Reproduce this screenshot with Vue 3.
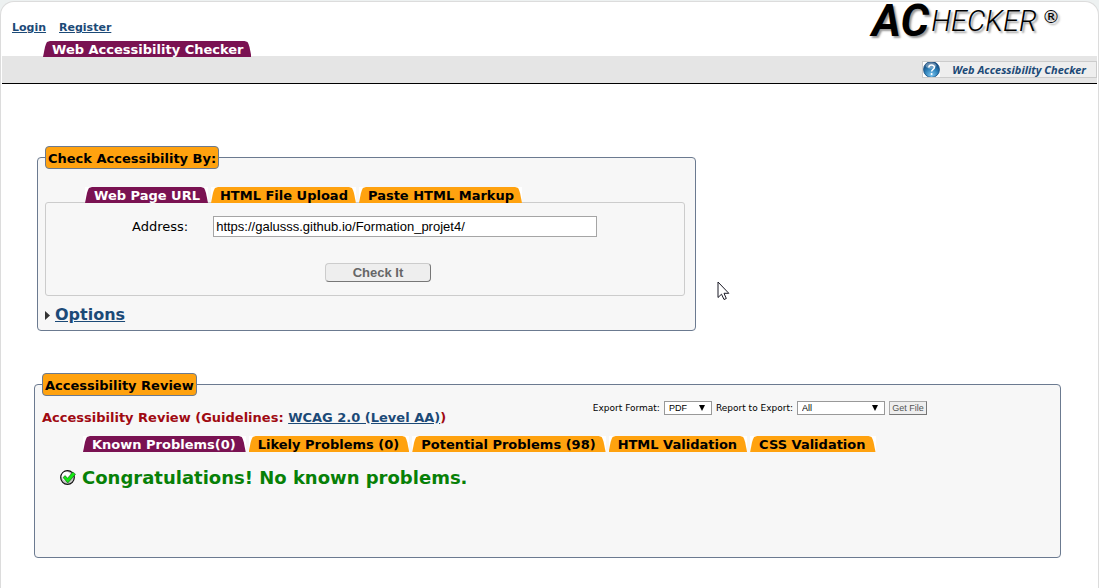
<script setup>
import { ref } from 'vue'

const address = ref('https://galusss.github.io/Formation_projet4/')
const inputTabs = ['Web Page URL', 'HTML File Upload', 'Paste HTML Markup']
const reviewTabs = [
  'Known Problems(0)',
  'Likely Problems (0)',
  'Potential Problems (98)',
  'HTML Validation',
  'CSS Validation',
]
const activeInput = ref(0)
const activeReview = ref(0)
</script>

<template>
  <div class="page">
    <header class="top">
      <div class="left">
        <nav class="account">
          <a href="#login">Login</a>
          <a href="#register">Register</a>
        </nav>
        <nav class="main-tabs">
          <a href="#checker" class="tab active">Web Accessibility Checker</a>
        </nav>
      </div>
      <div class="logo" aria-label="AChecker">
        <span class="big">AC</span><span class="small">HECKER</span><span class="reg">®</span>
      </div>
    </header>

    <div class="bar">
      <a href="#help" class="help">
        <svg width="17" height="15" viewBox="0 1 17 15" aria-hidden="true">
          <defs>
            <radialGradient id="ball" cx="0.5" cy="0.85" r="0.8">
              <stop offset="0" stop-color="#7cc4ee" />
              <stop offset="0.5" stop-color="#2f83bb" />
              <stop offset="1" stop-color="#0d3f74" />
            </radialGradient>
          </defs>
          <rect width="17" height="17" fill="#fff" />
          <circle cx="8.500" cy="8.500" r="8" fill="url(#ball)" stroke="#1b4f80" stroke-width="0.8" />
          <ellipse cx="8" cy="4.500" rx="5.500" ry="3.300" fill="#fff" opacity="0.35" />
          <path d="M5.800 6.600C5.800 3.200 11.400 3.200 11.400 6.400C11.400 8.300 8.600 8.400 8.600 10.600" fill="none" stroke="#fff" stroke-width="1.500" />
          <rect x="7.800" y="12" width="1.600" height="2" fill="#fff" />
        </svg>
        <span>Web Accessibility Checker</span>
      </a>
    </div>

    <main>
      <fieldset class="panel check">
        <legend>Check Accessibility By:</legend>
        <ul class="tabs">
          <li v-for="(t, i) in inputTabs" :key="t">
            <button type="button" class="tab" :class="{ active: i === activeInput }" @click="activeInput = i">{{ t }}</button>
          </li>
        </ul>
        <form class="url-box" @submit.prevent>
          <div class="field">
            <label for="address">Address:</label>
            <input id="address" v-model="address" type="text" />
          </div>
          <button type="submit" class="check-btn">Check It</button>
        </form>
        <div class="options">
          <svg width="5" height="9" viewBox="0 0 5 9" aria-hidden="true"><path d="M0 0L5 4.500L0 9Z" fill="#333" /></svg>
          <a href="#options">Options</a>
        </div>
      </fieldset>

      <fieldset class="panel review">
        <legend>Accessibility Review</legend>
        <div class="review-head">
          <h2>Accessibility Review (Guidelines: <a href="#wcag">WCAG 2.0 (Level AA)</a>)</h2>
          <form class="export" @submit.prevent>
            <label for="format">Export Format:</label>
            <span class="select format">
              <select id="format"><option>PDF</option></select>
              <svg width="6" height="6" viewBox="0 0 6 6" aria-hidden="true"><path d="M0 0H6L3 6Z" /></svg>
            </span>
            <label for="report">Report to Export:</label>
            <span class="select report">
              <select id="report"><option>All</option></select>
              <svg width="6" height="6" viewBox="0 0 6 6" aria-hidden="true"><path d="M0 0H6L3 6Z" /></svg>
            </span>
            <button type="submit">Get File</button>
          </form>
        </div>
        <ul class="tabs">
          <li v-for="(t, i) in reviewTabs" :key="t">
            <button type="button" class="tab" :class="{ active: i === activeReview }" @click="activeReview = i">{{ t }}</button>
          </li>
        </ul>
        <p class="congrats">
          <svg width="16" height="16" viewBox="0 0 16 16" aria-hidden="true">
            <circle cx="7.500" cy="7.500" r="6.800" fill="#c4c4c4" stroke="#111" stroke-width="1.200" />
            <circle cx="6.300" cy="6.300" r="4.500" fill="#fff" />
            <path d="M3 7.500L5.200 5.600L7.500 8.300L12.800 2L15.500 4.200L7.800 13Z" fill="#12e812" stroke="#063f06" stroke-width="0.500" />
          </svg>
          <span>Congratulations! No known problems.</span>
        </p>
      </fieldset>
    </main>

    <svg class="pointer" width="13" height="20" viewBox="0 0 13 20" aria-hidden="true">
      <path d="M1 1V16.500L4.500 13.200L7 18.500L9.300 17.500L7 12.300H11.800Z" fill="#fff" stroke="#181824" stroke-width="1" />
    </svg>
  </div>
</template>

<style>
body {
  background: #edf1f1;
}
</style>

<style scoped>
.page {
  position: relative;
  box-sizing: border-box;
  min-height: calc(100vh - 1px);
  margin-top: 1px;
  border: 1px solid #dcdcdc;
  border-bottom: 0;
  border-radius: 14px 14px 0 0;
  background: #fff;
  padding: 0 1px;
  font: 13px/16px Verdana, "DejaVu Sans", sans-serif;
  color: #000;
}
a {
  color: #1c4a77;
}
.top {
  display: flex;
  justify-content: space-between;
  height: 54px;
}
.account {
  display: flex;
  gap: 13px;
  padding: 18px 0 0 10px;
  font-size: 11px;
  font-weight: bold;
}
.main-tabs {
  display: flex;
  margin: 5px 0 0 41px;
}
.tab {
  display: block;
  height: 16px;
  margin: 0;
  border: 0;
  padding: 0 8px 0 9px;
  background: #ffa20f;
  color: #000;
  font: bold 13px/17px Verdana, "DejaVu Sans", sans-serif;
  text-decoration: none;
  white-space: nowrap;
  clip-path: polygon(0 100%, 2px 6px, 3px 3px, 4px 1px, 7px 0, calc(100% - 7px) 0, calc(100% - 4px) 1px, calc(100% - 3px) 3px, calc(100% - 2px) 6px, 100% 100%);
}
.tab.active {
  background: #7a1252;
  color: #fff;
}
.logo {
  display: flex;
  align-items: flex-start;
  padding-right: 37px;
  text-shadow: 2px 2px 2px #999;
}
.big {
  font: italic bold 45px/38px Roboto, sans-serif;
}
.small {
  margin-left: 2px;
  font: italic 300 29px/38px Roboto, sans-serif;
}
.reg {
  margin-left: 5px;
  font: 18px/30px "DejaVu Sans", sans-serif;
}
.bar {
  display: flex;
  justify-content: flex-end;
  align-items: center;
  box-sizing: border-box;
  height: 28px;
  border-bottom: 1px solid #000;
  background: #e5e5e5;
}
.help {
  display: flex;
  align-items: center;
  gap: 12px;
  box-sizing: border-box;
  height: 17px;
  border: 1px solid #ccc;
  padding: 0 10px 0 0;
  background: #eee;
  font: italic bold 11px/15px "Noto Sans", sans-serif;
  text-decoration: none;
}
main {
  padding: 62px 36px 30px 32px;
}
.panel {
  box-sizing: border-box;
  margin: 0;
  border: 1px solid #6b7a90;
  border-radius: 4px;
  background: #f7f7f7;
  min-width: 0;
}
.check {
  width: 64.2%;
  margin-left: 3px;
  padding: 0 10px 5px 7px;
}
legend {
  box-sizing: border-box;
  height: 23px;
  border: 1px solid #6b7a90;
  border-radius: 4px;
  padding: 0 2px;
  background: #ffa20f;
  font-weight: bold;
  line-height: 23px;
}
.tabs {
  display: flex;
  gap: 3px;
  margin: 0;
  padding: 0;
  list-style: none;
}
.tabs li {
  background: #fff;
}
.check .tabs {
  position: relative;
  margin: 18px 0 -1px 40px;
}
.url-box {
  box-sizing: border-box;
  border: 1px solid #ccc;
  border-radius: 3px;
  padding: 13px 0;
}
.field {
  display: flex;
  align-items: center;
  gap: 25px;
  padding-left: 86px;
}
.field input {
  box-sizing: border-box;
  width: 384px;
  height: 21px;
  border: 1px solid #a5a5a5;
  padding: 0 2px;
  background: #fff;
  color: #000;
  font: 13px Arial, "Liberation Sans", sans-serif;
}
.check-btn {
  display: block;
  box-sizing: border-box;
  width: 106px;
  height: 19px;
  margin: 26px 0 0 279px;
  border: 1px solid #ccc;
  border-right-color: #777;
  border-bottom-color: #777;
  border-radius: 4px;
  padding: 0;
  background: #eee;
  color: #666;
  font: bold 13px/15px Arial, "Liberation Sans", sans-serif;
}
.options {
  display: flex;
  align-items: center;
  gap: 5px;
  margin-top: 9px;
  font-size: 16px;
  font-weight: bold;
  line-height: 20px;
}
.review {
  margin-top: 42px;
  padding: 0 0 68px 7px;
}
.review-head {
  display: flex;
  justify-content: space-between;
  align-items: flex-start;
  padding: 5px 133px 0 0;
}
h2 {
  margin: 9px 0 0;
  color: #a00a12;
  font-size: 13px;
  line-height: 16px;
  white-space: nowrap;
}
.export {
  display: flex;
  align-items: center;
  gap: 4px;
  font-size: 9px;
  line-height: 12px;
  white-space: nowrap;
}
.select {
  position: relative;
}
.select svg {
  position: absolute;
  right: 7px;
  top: 4px;
  pointer-events: none;
}
.export select {
  display: block;
  appearance: none;
  box-sizing: border-box;
  width: 100%;
  height: 14px;
  border: 1px solid #999;
  border-radius: 0;
  padding: 0 4px;
  background: #fff;
  color: #000;
  font: 9px/12px Arial, "Liberation Sans", sans-serif;
}
.format {
  width: 48px;
}
.report {
  width: 88px;
}
.export button {
  box-sizing: border-box;
  width: 38px;
  height: 14px;
  border: 1px solid #aaa;
  border-right-color: #777;
  border-bottom-color: #777;
  padding: 0;
  background: #eee;
  color: #555;
  font: 9px/12px Arial, "Liberation Sans", sans-serif;
}
.review .tabs {
  margin: 10px 0 0 41px;
}
.review .tab {
  padding: 0 9px;
  padding-right: 10px;
}
.congrats {
  display: flex;
  align-items: center;
  gap: 6px;
  margin: 15px 0 0 18px;
  color: #078007;
  font-size: 18px;
  font-weight: bold;
  line-height: 22px;
}
.pointer {
  position: absolute;
  left: 716px;
  top: 279px;
}
</style>
